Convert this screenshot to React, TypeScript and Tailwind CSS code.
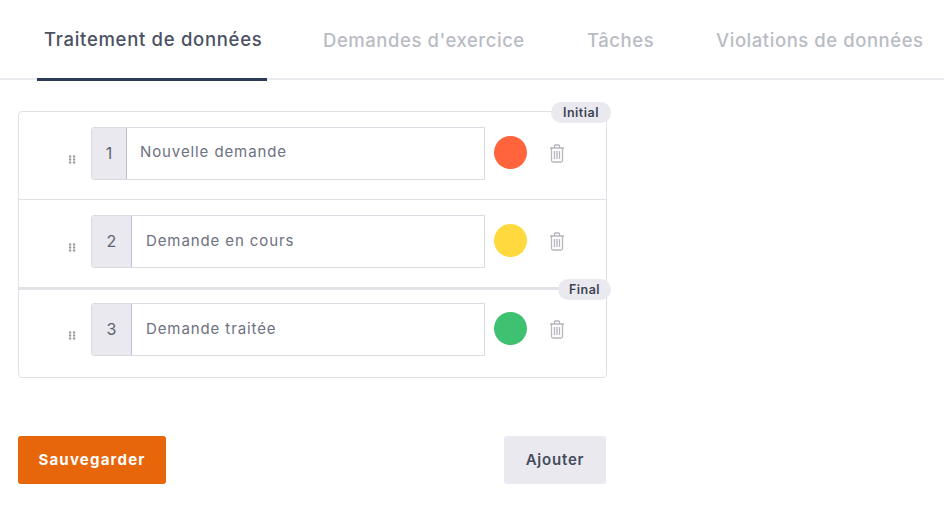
import React from "react";

function Grip() {
  return (
    <svg width="9" height="9" viewBox="0 0 9 9" className="mt-[11px] shrink-0 text-[#8f939c]" fill="currentColor">
      {[0.5, 3.5, 6.5].map((y) =>
        [1, 5].map((x) => <rect key={`${x}-${y}`} x={x} y={y} width="2.2" height="2" />)
      )}
    </svg>
  );
}

function Trash() {
  return (
    <svg width="16" height="19" viewBox="0 0 16 19" fill="none" stroke="#b4b7be" strokeWidth="1.3" className="shrink-0">
      <path d="M1 4h14M5.5 4V2a1 1 0 0 1 1-1h3a1 1 0 0 1 1 1v2" />
      <path d="M2.5 4v12.5a1.5 1.5 0 0 0 1.5 1.5h8a1.5 1.5 0 0 0 1.5-1.5V4" />
      <path d="M5.5 7v8M8 7v8M10.5 7v8" />
    </svg>
  );
}

function Row({ n, label, color, numW, rowClass, badge }: { n: number; label: string; color: string; numW: string; rowClass: string; badge?: React.ReactNode }) {
  return (
    <div className={`relative flex items-center pl-[49px] ${rowClass}`}>
      <Grip />
      <div className="ml-[14px] flex h-[53px] w-[394px] overflow-hidden rounded-l-[3px] border border-[#d8dbe2]">
        <div className={`flex ${numW} shrink-0 items-center justify-center border-r border-[#b9c1d2] bg-[#e9e9ef] text-[16px] text-[#5d6270] ${n === 1 ? "pb-[1px]" : "pb-[2px]"}`}>{n}</div>
        <div className={`flex flex-1 items-center text-[15px] tracking-[0.9px] text-[#6d7180] ${n === 1 ? "pb-[2px] pl-[13px]" : "pl-[14px]"}`}>{label}</div>
      </div>
      <div className="mb-[2px] ml-[9px] h-[33px] w-[33px] shrink-0 rounded-full" style={{ backgroundColor: color }} />
      <div className="ml-[22px]"><Trash /></div>
      {badge}
    </div>
  );
}

export default function App() {
  return (
    <div className="h-[526px] w-[944px] overflow-hidden bg-white font-['Inter','Liberation_Sans',sans-serif]">
      <div className="flex h-[80px] items-stretch border-b-2 border-[#e8eaee] pl-[37px]">
        <div className="flex h-[81px] w-[230px] shrink-0 items-center border-b-[3px] border-[#2b3a55] pl-[7px] pt-[2px] text-[18.5px] font-medium tracking-[0.7px] whitespace-nowrap text-[#4b5162]">Traitement de données</div>
        <div className="ml-[56px] flex w-[264px] shrink-0 items-center pt-[4px] text-[18.5px] font-medium tracking-[0.55px] whitespace-nowrap text-[#b9bcc4]">Demandes d'exercice</div>
        <div className="flex w-[129px] shrink-0 items-center pt-[4px] text-[18.5px] font-medium tracking-[0.55px] whitespace-nowrap text-[#b9bcc4]">Tâches</div>
        <div className="flex items-center pt-[4px] text-[18.5px] font-medium tracking-[0.55px] whitespace-nowrap text-[#b9bcc4]">Violations de données</div>
      </div>

      <div className="ml-[18px] mt-[31px] flex h-[267px] w-[589px] flex-col rounded-[4px] border border-[#dfe1e6]">
        <Row
          n={1}
          label="Nouvelle demande"
          color="#ff643d"
          numW="w-[35px]"
          rowClass="h-[88px] border-b border-[#dfe1e6] pb-[4px]"
          badge={<span className="absolute right-[-5px] top-[-10px] flex h-[21px] w-[60px] items-center justify-center rounded-full bg-[#e9e9ef] pt-[1px] text-[12.5px] font-semibold tracking-[0.5px] text-[#3e4454]">Initial</span>}
        />
        <Row n={2} label="Demande en cours" color="#ffd93d" numW="w-[40px]" rowClass="h-[90px] border-b-[3px] border-[#e2e3e6] pb-[4px]" />
        <Row
          n={3}
          label="Demande traitée"
          color="#3fc172"
          numW="w-[40px]"
          rowClass="h-[87px] pb-[8px]"
          badge={<span className="absolute right-[-5px] top-[-11px] flex h-[21px] w-[53px] items-center justify-center rounded-full bg-[#e9e9ef] pt-[1px] text-[12.5px] font-semibold tracking-[0.5px] text-[#3e4454]">Final</span>}
        />
      </div>

      <div className="ml-[18px] mt-[58px] flex w-[588px] items-center justify-between">
        <button className="h-[48px] w-[148px] rounded-[3px] bg-[#e8660a] text-[15px] font-bold tracking-[1.2px] text-white">Sauvegarder</button>
        <button className="h-[48px] w-[102px] rounded-[3px] bg-[#e9e9ef] text-[15px] font-semibold tracking-[0.8px] text-[#454b5c]">Ajouter</button>
      </div>
    </div>
  );
}
